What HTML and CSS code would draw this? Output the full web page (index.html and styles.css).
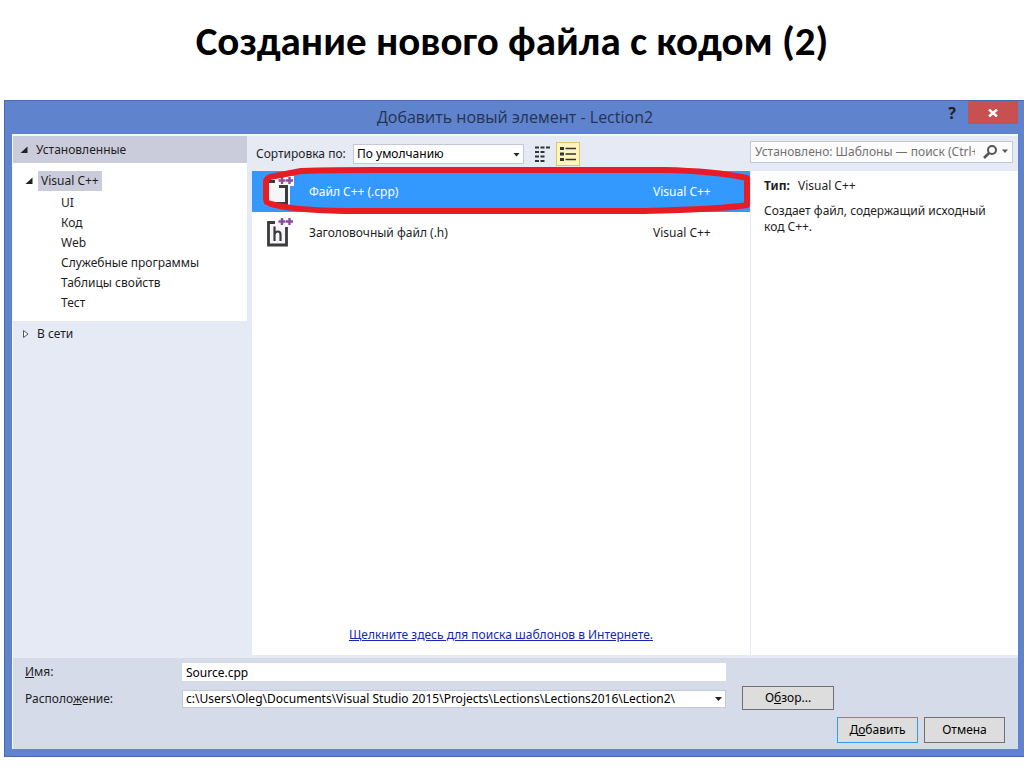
FILE: index.html
```html
<!DOCTYPE html>
<html lang="ru">
<head>
<meta charset="utf-8">
<meta name="viewport" content="width=device-width, initial-scale=1">
<title>Создание нового файла с кодом (2)</title>
<link rel="stylesheet" href="styles.css">
</head>
<body>
<h1 class="slide-title">Создание нового файла с кодом (2)</h1>
<main class="dialog">
  <header class="titlebar">
    <h2 class="titlebar-text">Добавить новый элемент - Lection2</h2>
    <div class="window-buttons">
      <button class="help" type="button">?</button>
      <button class="close" type="button" aria-label="Закрыть">
        <svg width="10" height="8" viewBox="0 0 10 8"><path d="M1 0.5L9 7.5M9 0.5L1 7.5" stroke="#fff" stroke-width="2.4"/></svg>
      </button>
    </div>
  </header>
  <div class="client">
    <div class="panes">
      <nav class="tree">
        <button class="tree-head" type="button">
          <svg width="8" height="8" viewBox="0 0 8 8"><path d="M7.5 0.5V7H0.5z" fill="#222"/></svg>
          Установленные
        </button>
        <div class="tree-body">
          <button class="tree-parent" type="button">
            <svg width="8" height="8" viewBox="0 0 8 8"><path d="M7.5 0.5V7H0.5z" fill="#222"/></svg>
            <span class="tree-current">Visual C++</span>
          </button>
          <ul class="tree-list">
            <li>UI</li>
            <li>Код</li>
            <li>Web</li>
            <li>Служебные программы</li>
            <li>Таблицы свойств</li>
            <li>Тест</li>
          </ul>
        </div>
        <button class="tree-online" type="button">
          <svg width="8" height="10" viewBox="0 0 8 10"><path d="M1.5 1.5V8.5L6 5z" fill="#fff" stroke="#555"/></svg>
          В сети
        </button>
      </nav>
      <section class="templates">
        <div class="toolbar">
          <label for="sort">Сортировка по:</label>
          <span class="select-wrap sort">
            <select id="sort"><option>По умолчанию</option></select>
            <svg class="arrow" width="7" height="4" viewBox="0 0 7 4"><path d="M0.5 0H6.5L3.5 3.5z" fill="#222"/></svg>
          </span>
          <button class="view" type="button" aria-label="Мелкие значки">
            <svg width="15" height="16" viewBox="0 0 15 16"><path d="M0 1.5h4M5.5 1.5h4M11 1.5h4M0 6h4M5.5 6h4M0 10.500h4M5.500 10.500h4M0 15h4M5.500 15h4" stroke="#333" stroke-width="2.200"/></svg>
          </button>
          <button class="view active" type="button" aria-label="Средние значки">
            <svg width="16" height="14" viewBox="0 0 16 14"><path d="M0 1.500h4M0 7h4M0 12.500h4" stroke="#333" stroke-width="3"/><path d="M5.500 1.500h10.500M5.500 7h10.500M5.500 12.500h10.500" stroke="#333" stroke-width="1.600"/></svg>
          </button>
        </div>
        <div class="list">
          <div class="item selected">
            <svg class="icon" width="30" height="32" viewBox="0 0 30 32">
              <path d="M2 3H13V0H30V10H26V30H2z" fill="#f6f6f8"/>
              <path d="M3 5.500H11M15 10.500H22.500V27.500H3" fill="none" stroke="#3b3b3e" stroke-width="3"/>
              <path d="M14.500 4.500h7M18 1v7M22 4.500h7M25.500 1v7" stroke="#8d4d9c" stroke-width="2.400"/>
            </svg>
            <span class="item-name">Файл C++ (.cpp)</span>
            <span class="item-lang">Visual C++</span>
            <svg class="marker" viewBox="0 0 486 47" preserveAspectRatio="none" aria-hidden="true">
              <path d="M3 15Q3 10 12 9L38 4Q70 3 110 3H400Q450 4 483 11V38Q460 42 380 44H80Q25 43 5 36Q3 35 3 31z" fill="none" stroke="#e81c24" stroke-width="6" stroke-linejoin="round"/>
            </svg>
          </div>
          <div class="item">
            <svg class="icon" width="30" height="32" viewBox="0 0 30 32">
              <path d="M4 5H22V28H4z" fill="#f5f4f6"/>
              <path d="M11 5.500H4.500V28H22.500V10" fill="none" stroke="#3b3b3e" stroke-width="2.800"/>
              <path d="M10.500 9.500V24M10.500 17Q11.500 14.500 13.800 14.500Q16.500 14.500 16.500 17.500V24" fill="none" stroke="#3b3b3e" stroke-width="2.200"/>
              <path d="M14.500 4.500h7M18 1v7M22 4.500h7M25.500 1v7" stroke="#8d4d9c" stroke-width="2.400"/>
            </svg>
            <span class="item-name">Заголовочный файл (.h)</span>
            <span class="item-lang">Visual C++</span>
          </div>
          <a class="online-link" href="#">Щелкните здесь для поиска шаблонов в Интернете.</a>
        </div>
      </section>
      <aside class="details">
        <div class="search">
          <input type="text" aria-label="Поиск" placeholder="Установлено: Шаблоны — поиск (Ctrl+E)">
          <button type="button" aria-label="Найти">
            <svg width="26" height="14" viewBox="0 0 26 14"><circle cx="9" cy="5" r="4" fill="none" stroke="#555" stroke-width="2"/><path d="M6 8L1 13" stroke="#555" stroke-width="2.600"/><path d="M19 4.500h6L22 8z" fill="#555"/></svg>
          </button>
        </div>
        <div class="description">
          <p><b>Тип:</b> Visual C++</p>
          <p>Создает файл, содержащий исходный код C++.</p>
        </div>
      </aside>
    </div>
    <form class="footer">
      <label for="name"><u>И</u>мя:</label>
      <input id="name" class="name" type="text" value="Source.cpp">
      <label class="row-two" for="place">Располо<u>ж</u>ение:</label>
      <span class="select-wrap row-two">
        <select id="place"><option>c:\Users\Oleg\Documents\Visual Studio 2015\Projects\Lections\Lections2016\Lection2\</option></select>
        <svg class="arrow" width="7" height="4" viewBox="0 0 7 4"><path d="M0 0H7L3.500 4z" fill="#222"/></svg>
      </span>
      <button class="push browse row-two" type="button"><span>О<u>б</u>зор...</span></button>
      <div class="actions">
        <button class="push primary" type="button"><span>Д<u>о</u>бавить</span></button>
        <button class="push" type="button">Отмена</button>
      </div>
    </form>
  </div>
</main>
</body>
</html>
```
FILE: styles.css
```css
* { box-sizing: border-box; }
body {
  margin: 0;
  min-height: 100vh;
  display: flex;
  flex-direction: column;
  background: #fff;
  color: #1e1e1e;
  font: 12px/16px "Noto Sans", "Open Sans", sans-serif;
}
button, input, select { font: inherit; color: inherit; }
button { padding: 0; border: 0; background: none; }
svg { display: block; flex: none; }
.slide-title {
  margin: 0;
  height: 100px;
  padding-top: 16px;
  text-align: center;
  color: #000;
  font: bold 41px/50px Carlito, Lato, sans-serif;
}
.dialog {
  flex: 1;
  display: flex;
  flex-direction: column;
  margin: 0 0 10px 4px;
  padding: 0 6px 7px 7px;
  border: 1px solid #4a69ae;
  border-right: 0;
  background: #5f83cd;
}
.titlebar { position: relative; height: 33px; }
.titlebar-text {
  margin: 0;
  padding-top: 4px;
  text-align: center;
  color: #253350;
  font: 16px/24px "Open Sans", sans-serif;
}
.window-buttons {
  position: absolute;
  top: 0;
  right: 0;
  display: flex;
}
.help { width: 32px; font-size: 16px; font-weight: bold; }
.close {
  display: grid;
  place-items: center;
  width: 50px;
  height: 23px;
  background: #c75050;
}
.client {
  flex: 1;
  display: flex;
  flex-direction: column;
  border: 1px solid #f5f8ff;
  border-width: 2px 0 0 1px;
  background: #e6eaf5;
}
.panes {
  flex: 1;
  display: grid;
  grid-template-columns: 234px minmax(0, 1fr) 268px;
  padding-bottom: 3px;
}
.tree-head, .tree-parent, .tree-online {
  display: flex;
  align-items: center;
  width: 100%;
  text-align: left;
}
.tree-head { height: 27px; gap: 8px; padding-left: 7px; background: #cbccdb; }
.tree-body { padding: 8px 0; background: #fff; }
.tree-parent { gap: 5px; padding-left: 12px; }
.tree-current { padding: 2px 3px; background: #cbccdb; }
.tree-list { margin: 0; padding: 2px 0 0 48px; list-style: none; }
.tree-list li { height: 20px; line-height: 20px; }
.tree-online { height: 26px; gap: 7px; padding-left: 9px; }
.templates { display: flex; flex-direction: column; margin-left: 5px; }
.toolbar {
  display: flex;
  align-items: center;
  height: 35px;
  padding-left: 4px;
}
.select-wrap { position: relative; display: block; }
.select-wrap select {
  display: block;
  width: 100%;
  height: 18px;
  padding: 0 16px 0 3px;
  border: 1px solid #c3c8d8;
  border-radius: 0;
  background: #fff;
  color: #000;
  line-height: 16px;
  appearance: none;
}
.arrow { position: absolute; right: 4px; top: 7px; pointer-events: none; }
.toolbar label { width: 97px; white-space: nowrap; }
.sort { width: 171px; margin-right: 6px; }
.sort select { height: 20px; }
.sort .arrow { top: 9px; }
.view {
  display: grid;
  place-items: center;
  width: 24px;
  height: 24px;
  margin-right: 2px;
}
.active { border: 1px solid #e5c365; background: #fdf4bf; }
.list {
  flex: 1;
  display: flex;
  flex-direction: column;
  background: #fff;
}
.item {
  position: relative;
  display: flex;
  align-items: center;
  height: 41px;
  padding-left: 12px;
}
.item-name { flex: 1; padding-left: 15px; }
.item-lang { width: 97px; }
.selected { background: #3399ff; color: #fff; }
.marker {
  position: absolute;
  top: -4px;
  left: 11px;
  width: calc(100% - 11px);
  height: 47px;
}
.online-link { margin: auto 0 12px; text-align: center; color: #1428b4; }
.details { display: flex; flex-direction: column; }
.search {
  display: flex;
  align-items: center;
  height: 22px;
  margin: 5px 5px 8px 0;
  padding: 0 3px 0 4px;
  border: 1px solid #c3c8d8;
  background: #fcfcfd;
}
.search input {
  flex: 1;
  min-width: 0;
  padding: 0;
  border: 0;
  background: none;
}
.search input::placeholder { color: #717171; opacity: 1; }
.search button { margin-left: 8px; }
.description {
  flex: 1;
  padding: 7px 20px 0 13px;
  border-left: 1px solid #e6eaf5;
  background: #fff;
}
.description p { margin: 0 0 9px; }
.description b { margin-right: 5px; }
.footer {
  display: grid;
  grid-template-columns: 157px minmax(0, 1fr) 292px;
  align-items: center;
  padding: 5px 0 6px 12px;
  background: #d6dbe9;
}
.name {
  height: 18px;
  padding: 0 3px;
  border: 1px solid #fff;
  background: #fff;
  color: #000;
}
.row-two { grid-row: 2; }
.push {
  display: grid;
  place-items: center;
  width: 81px;
  height: 26px;
  border: 1px solid #707070;
  background: #ddd;
  color: #000;
}
.browse { width: 92px; height: 24px; margin: 5px 0 7px 16px; }
.primary { border-color: #3399ff; }
.actions {
  grid-column: 1 / -1;
  display: flex;
  justify-content: flex-end;
  gap: 6px;
  padding-right: 13px;
}
```
